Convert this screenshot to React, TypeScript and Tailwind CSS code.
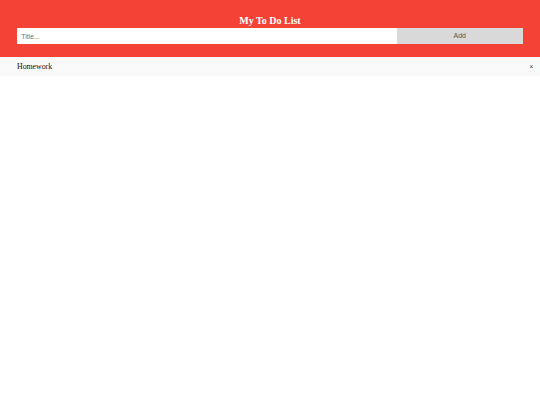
export default function App() {
  return (
    <div className="min-h-screen bg-white" style={{ fontFamily: '"Liberation Serif", "Times New Roman", serif' }}>
      <div className="bg-[#f44336] px-[17px] py-[12.6px] text-center text-white">
        <h2 className="m-[2px] text-[10px] leading-[11.5px] font-bold">My To Do List</h2>
        <div className="flex font-['Liberation_Sans',Arial,sans-serif]">
          <input
            type="text"
            placeholder="Title..."
            className="h-[16px] w-3/4 bg-white px-[4.2px] text-[7px] text-black outline-none placeholder:text-[#757575]"
          />
          <span className="flex h-[16px] w-1/4 items-center justify-center bg-[#d9d9d9] text-[7px] text-[#555]">
            Add
          </span>
        </div>
      </div>
      <ul>
        <li className="relative bg-[#f9f9f9] pt-[6px] pb-[4.8px] pr-[3.4px] pl-[17px] text-[7.8px] leading-[8.7px] text-[#111]">
          Homework
          <span className="absolute top-0 right-0 pt-[6px] px-[6.7px] font-['Liberation_Sans',Arial,sans-serif] text-[6.5px] leading-[8.7px] text-[#333]">
            ×
          </span>
        </li>
      </ul>
    </div>
  );
}
